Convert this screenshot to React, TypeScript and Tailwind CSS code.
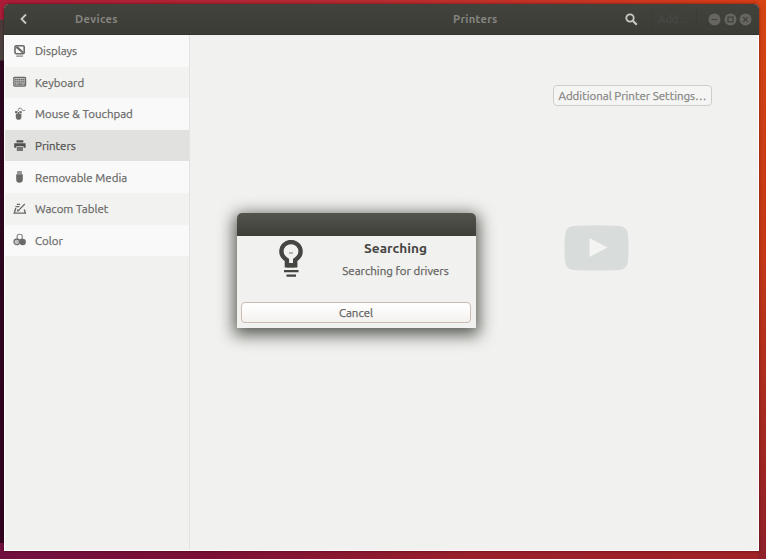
import React from "react";

type IconName = "display" | "keyboard" | "mouse" | "printer" | "usb" | "tablet" | "color";

function Icon({ name }: { name: IconName }) {
  return (
    <svg viewBox="0 0 14 14" className="h-3.5 w-3.5 shrink-0" fill="none" stroke="currentColor" strokeWidth="1.6">
      {name === "display" && (
        <>
          <rect x="2" y="1.8" width="9.2" height="8" rx="1.2" />
          <path d="M3 2.6h2l5.5 5.2V9H9L3 4z" fill="currentColor" stroke="none" />
          <path d="M3.2 12.2h6.8" strokeWidth="1.3" strokeOpacity=".8" />
        </>
      )}
      {name === "keyboard" && (
        <>
          <rect x="0.8" y="2.3" width="11.8" height="8.8" rx="0.8" fill="currentColor" fillOpacity=".4" strokeWidth="1.2" />
          <path d="M2 4.6h10M2 6.8h10" strokeWidth="1.3" strokeDasharray="1.4 .5" />
          <path d="M2 9.1h1.5M4.5 9.1h5M10.5 9.1h1.5" strokeWidth="1.2" />
        </>
      )}
      {name === "mouse" && (
        <>
          <path d="M5.3 4V2.6C5.3.6 8.5.6 8.9 2.4s2 1 3.3 1" strokeWidth=".8" />
          <path d="M2.8 6.5h5.6v3.4a2.8 2.8 0 0 1-5.6 0z" fill="currentColor" stroke="none" />
          <path d="M2 6V4.3L4.6 4v2zM6.4 6V4l2.4.3V6z" fill="currentColor" stroke="none" />
          <path d="M5.5 5v3" strokeWidth="1" />
        </>
      )}
      {name === "printer" && (
        <g fill="currentColor" stroke="none">
          <path d="M3.5 1.3h6.8v2.2H3.5zM1.2 4.2h11.4v4.6h-2V7.2H3.3v1.6H1.2z" />
          <path d="M3.8 8h6.2v3.9H3.8z" fillOpacity=".75" />
        </g>
      )}
      {name === "usb" && (
        <g fill="currentColor" stroke="none">
          <path d="M4.1 1h4.8v3H4.1z" fillOpacity=".7" />
          <path d="M3.2 4.2h6.6v5.3a3.3 3.2 0 0 1-6.6 0z" />
        </g>
      )}
      {name === "tablet" && (
        <>
          <path d="M2.8 6L1.3 11.1h11L11.3 7.5" strokeWidth="1.4" />
          <path d="M11.8 2L5.3 8.7M2.4 4.6h4M3.8 2.3h3.4" strokeWidth="1.2" />
          <path d="M3.8 9.7l.6-2.6 2.3 1.8z" fill="currentColor" stroke="none" />
        </>
      )}
      {name === "color" && (
        <>
          <circle cx="6.7" cy="4" r="2.7" strokeWidth="1.1" strokeOpacity=".8" />
          <circle cx="3.7" cy="8.9" r="2.8" strokeWidth="1.1" fill="currentColor" fillOpacity=".4" />
          <circle cx="9.7" cy="9" r="3.2" fill="currentColor" stroke="none" />
        </>
      )}
    </svg>
  );
}

const items: { icon: IconName; label: string; row: string; text: string }[] = [
  { icon: "display", label: "Displays", row: "bg-[#f9f9f9]", text: "text-[#6a6a68]" },
  { icon: "keyboard", label: "Keyboard", row: "bg-[#f2f2f1]", text: "text-[#6a6a68]" },
  { icon: "mouse", label: "Mouse & Touchpad", row: "bg-[#f9f9f9]", text: "text-[#6a6a68]" },
  { icon: "printer", label: "Printers", row: "bg-[#e1e1df]", text: "text-[#50504e]" },
  { icon: "usb", label: "Removable Media", row: "bg-[#f9f9f9]", text: "text-[#6a6a68]" },
  { icon: "tablet", label: "Wacom Tablet", row: "bg-[#f2f2f1]", text: "text-[#6a6a68]" },
  { icon: "color", label: "Color", row: "bg-[#f9f9f9]", text: "text-[#6a6a68]" },
];

function WindowControls() {
  return (
    <div className="flex gap-[2.5px] text-[#41413c]">
      {["M3.5 6.5h6", "M4 4.2h5v4.6H4z", "M4.2 4.2l4.6 4.6M8.8 4.2L4.2 8.8"].map((d) => (
        <svg key={d} viewBox="0 0 13 13" className="h-[13px] w-[13px]" fill="none" stroke="currentColor">
          <circle cx="6.5" cy="6.5" r="6" fill="#66665f" stroke="none" />
          <path d={d} strokeWidth="1.2" />
        </svg>
      ))}
    </div>
  );
}

function SearchDialog() {
  return (
    <div className="absolute left-[237px] top-[213px] flex h-[115px] w-[239px] flex-col rounded-t-[5px] bg-[#f1f1ef] shadow-[0_4px_16px_3px_rgba(35,40,30,0.75)]">
      <div className="h-[23px] shrink-0 rounded-t-[5px] bg-gradient-to-b from-[#54544d] to-[#3f3f3a]" />
      <div className="flex h-[66px] shrink-0">
        <svg viewBox="0 0 24 40" className="ml-[42px] mt-[4px] h-10 w-6 shrink-0" fill="none" stroke="#454541">
          <path d="M7.9 25.3V20C5.1 18.2 2.4 16 2.4 11.6a9.6 9.6 0 0 1 19.2 0c0 4.4-2.7 6.6-5.4 8.4v5.3z" strokeWidth="4.4" />
          <path d="M8 27.4v-4.4h8v4.4z" fill="#454541" stroke="none" />
          <path d="M10 13h4" stroke="#b4b4b0" strokeWidth="2" />
          <path d="M5 31.2h14.5M7.5 35.7h9.5" strokeWidth="2.3" />
        </svg>
        <div className="ml-[30px] flex w-[125px] flex-col items-center whitespace-nowrap">
          <div className="mt-[3px] text-[13.6px] font-bold leading-[18px] text-[#464643]">Searching</div>
          <div className="mt-[6px] text-[11.5px] leading-4 text-[#62625e] [-webkit-text-stroke:0.25px_currentColor]">Searching for drivers</div>
        </div>
      </div>
      <button className="ml-1 mr-[5px] h-[21px] shrink-0 rounded-[4px] border border-[#cdbbb3] bg-gradient-to-b from-white to-[#f3f2f0] text-[11.5px] leading-[18px] text-[#62625e] [-webkit-text-stroke:0.25px_currentColor]">Cancel</button>
    </div>
  );
}

export default function App() {
  return (
    <div className="relative h-[559px] w-[766px] overflow-hidden bg-[linear-gradient(100deg,#6c1044_0%,#7b1036_35%,#98202c_65%,#a02226_100%)] font-['Ubuntu','Noto_Sans',sans-serif]">
      <div className="absolute inset-x-0 top-0 h-2 bg-[linear-gradient(90deg,#aa1c37,#b82b30_50%,#d63d16)]" />
      <div className="absolute bottom-0 right-0 top-0 w-2 bg-[linear-gradient(180deg,#d54413,#c43817_45%,#992323_88%,#8e2029)]" />
      <div className="absolute left-0 top-0 h-[543px] w-1 bg-[linear-gradient(180deg,#aa1c37_0px,#aa1c37_19px,#4b3b3a_20px,#4b4541_60px,#2b0720_61px,#32031f_100%)]" />
      <div className="absolute left-1 top-1 flex h-[547px] w-[755px] flex-col overflow-hidden rounded-t-[5px] bg-[#f1f1ef] shadow-[0_0_2px_1px_rgba(40,0,10,0.3)]">
        <header className="flex h-[31px] shrink-0 items-center border-b border-[#33332f] bg-gradient-to-b from-[#43433e] to-[#3c3c37] text-[11.2px] font-bold text-[#85857f]">
          <svg viewBox="0 0 10 12" className="ml-[15px] h-3 w-2.5" fill="none" stroke="#c9c9c4" strokeWidth="1.8"><path d="M7 1.5L2.5 6L7 10.5" /></svg>
          <span className="ml-[46px] w-[100px] tracking-[0.3px]">Devices</span>
          <span className="ml-[278px] w-[100px] tracking-[0.3px]">Printers</span>
          <svg viewBox="0 0 13 13" className="ml-[72px] h-[13px] w-[13px]" fill="none" stroke="#c9c9c4" strokeWidth="1.8"><circle cx="5" cy="5" r="3.7" /><path d="M7.8 7.8l4 4" strokeWidth="2.2" /></svg>
          <div className="ml-[13px] flex h-5 w-[46px] items-center border-x border-[#3b3b36] pl-[6px] font-normal text-[#4b4b46]">Add…</div>
          <div className="ml-[11px]"><WindowControls /></div>
        </header>
        <div className="flex min-h-0 flex-1 border-x border-b border-white">
          <nav className="w-[185px] shrink-0 border-r border-[#e3e3e1]">
            {items.map((item) => (
              <div key={item.label} className={`flex h-[31.6px] items-center gap-2 whitespace-nowrap pl-2 text-[11.5px] ${item.row} ${item.text}`}>
                <Icon name={item.icon} />
                <span className="[-webkit-text-stroke:0.25px_currentColor]">{item.label}</span>
              </div>
            ))}
          </nav>
          <main className="flex flex-1 flex-col">
            <button className="ml-[363px] mt-[50px] h-[21px] w-[159px] whitespace-nowrap rounded-[4px] border border-[#cececc] bg-[#f5f5f4] text-[11.5px] leading-[18px] text-[#868683] [-webkit-text-stroke:0.25px_currentColor]">Additional Printer Settings…</button>
            <svg viewBox="0 0 65 46" className="ml-[373.5px] mt-[118.5px] h-[46px] w-[65px]">
              <path d="M9 1Q32 -.4 56 1Q63.5 2 64 10Q65 23 64 36Q63 44 56 45Q32 46.2 9 45Q1.5 44 1 36Q0 23 1 10Q1.5 2 9 1Z" fill="#d8dcda" />
              <path d="M25.5 13L43.5 22.5L25.5 32Z" fill="#f4f4f2" />
            </svg>
          </main>
        </div>
      </div>
      <SearchDialog />
    </div>
  );
}
